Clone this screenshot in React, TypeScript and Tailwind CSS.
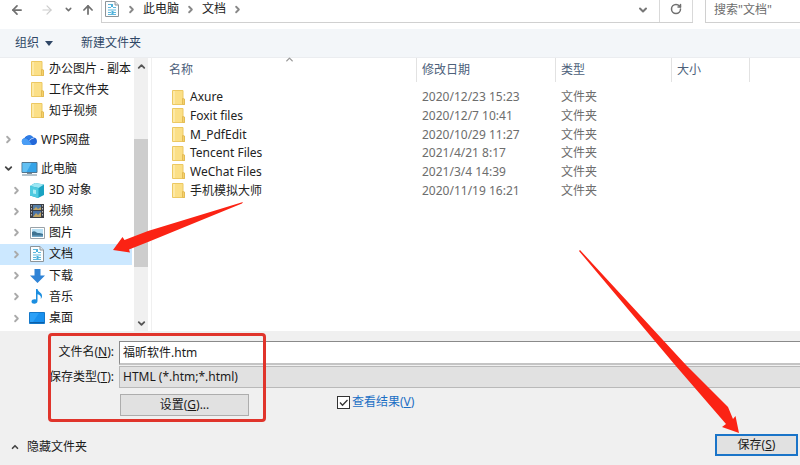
import { useState, type ReactNode } from "react";
import { ArrowLeft, ArrowRight, ArrowUp, ChevronDown, ChevronRight, ChevronUp, RotateCw } from "lucide-react";

const DocIcon = () => (
  <svg width="14" height="16" viewBox="0 0 14 16" aria-hidden="true">
    <path d="M.5.5H10L13.500 4V15.500H.5Z" fill="#fbfdfe" stroke="#8c9499" />
    <path d="M10 .5V4h3.500" fill="#dfe6ea" stroke="#8c9499" />
    <path d="M3 3.500h4M3 6.500h3M8 6.500h3M3 9h8M3 11.500h3M8 11.500h3M3 13.500h8" stroke="#5db8dd" />
    <path d="M6 3h2v3H6zM6.500 10h2v3h-2z" fill="#4db1dc" />
  </svg>
);

const FolderIcon = () => (
  <svg width="13" height="15" viewBox="0 0 13 15" className="shrink-0" aria-hidden="true">
    <path d="M.5.5h10.500v9l1.500 1v4H.5Z" fill="#fbdf86" stroke="#ecc862" />
    <path d="M10.500 8.500 12.500 9v5.500h-2z" fill="#f6d26b" stroke="#e3bb55" />
    <path d="M1 1h2v13H1z" fill="#fde9a6" />
  </svg>
);

const CloudIcon = () => (
  <svg width="17" height="12" viewBox="0 0 17 12" aria-hidden="true">
    <path d="M4 11a3.600 3.600 0 0 1-.5-7A5 5 0 0 1 12 3.500 3.800 3.800 0 0 1 13 11Z" fill="#2468d8" />
    <path d="M3.500 11a3.500 3.500 0 0 1-.3-6.800C6 3.700 7.500 6 9 8l2 3Z" fill="#4a9df5" />
    <path d="M4.500 3.500C6 1 9 .5 11 2c1 1 1.300 2 1.300 2.500C10.500 4 9.500 5 8.500 6.500 7.500 5 6.500 4 4.500 3.500Z" fill="#2f7de6" />
    <path d="M8.500 6.700C9.500 5 10.800 4.300 12.500 4.500" fill="none" stroke="#e6f1ff" strokeWidth=".8" />
  </svg>
);

const ComputerIcon = () => (
  <svg width="17" height="14" viewBox="0 0 17 14" aria-hidden="true">
    <path d="M1 .5h15v10H1Z" fill="#35a4e8" stroke="#51758e" />
    <path d="M1.500 1h9l-5 9h-4Z" fill="#62c0f3" />
    <path d="M6 11h5v1H6z" fill="#7d8b94" />
    <path d="M1 13h15" stroke="#6b8799" />
  </svg>
);

const CubeIcon = () => (
  <svg width="16" height="15" viewBox="0 0 16 15" aria-hidden="true">
    <path d="M1 3 6 0 15 1.500V12L9 15 1 12.500Z" fill="#1aa3c2" />
    <path d="M1 3 6 0l9 1.500L9.500 5Z" fill="#9be6f3" />
    <path d="M1 3l8.500 2V15L1 12.500Z" fill="#4fcbe0" />
    <path d="M4 6.500 7 7v4l-3-.5z" fill="#a9edf6" />
  </svg>
);

const VideoIcon = () => (
  <svg width="14" height="14" viewBox="0 0 14 14" aria-hidden="true">
    <path d="M0 0h14v14H0z" fill="#3c3f45" />
    <path d="M3 1h8v5H3z" fill="#557fa8" />
    <path d="M3 7h8v6H3z" fill="#4a73a5" />
    <path d="M3 6 6 3l2 2 3-2v3zM3 13l3-4 2 2 3-3v5z" fill="#c0a565" />
    <path d="M1.500 1v12M12.500 1v12" stroke="#b5b9bf" strokeDasharray="1.500 1.500" />
  </svg>
);

const PictureIcon = () => (
  <svg width="15" height="12" viewBox="0 0 15 12" aria-hidden="true">
    <path d="M.5.5h14v11H.5Z" fill="#fff" stroke="#9aa2a8" />
    <path d="M2 2h11v8H2z" fill="#b7e0f5" />
    <path d="M2 5c3-2 4 1 6 1s3 0 5 1v3H2Z" fill="#3f7391" />
    <path d="M2 8.500h11V10H2z" fill="#6fa5c4" />
  </svg>
);

const DownloadIcon = () => (
  <svg width="15" height="14" viewBox="0 0 15 14" aria-hidden="true">
    <path d="M4.500 0h6v6.500h4.500L7.500 14 0 6.500h4.500Z" fill="#2f83d6" />
  </svg>
);

const MusicIcon = () => (
  <svg width="12" height="15" viewBox="0 0 12 15" aria-hidden="true">
    <path d="M5 0h1.500c.5 3 5 3.500 4.500 7.500-.2 1.300-.7 2-1.300 2.500.8-3-1-4-3.200-4.700V12c0 1.800-1.500 2.800-3.200 2.800S.5 13.800.5 12.500 2 10.300 3.500 10.300c.6 0 1 0 1.500.3Z" fill="#1b8ee0" />
  </svg>
);

const DesktopIcon = () => (
  <svg width="16" height="12" viewBox="0 0 16 12" aria-hidden="true">
    <path d="M.5.5h15v11H.5Z" fill="#1890ee" stroke="#1478c9" />
    <path d="M1 1h9l-6 9H1z" fill="#2ba0f7" />
    <path d="M1 10.500h14" stroke="#0d5fa8" />
  </svg>
);

const quickFolders = ["办公图片 - 副本", "工作文件夹", "知乎视频"];

const pcItems: { label: string; icon: ReactNode }[] = [
  { label: "3D 对象", icon: <CubeIcon /> },
  { label: "视频", icon: <VideoIcon /> },
  { label: "图片", icon: <PictureIcon /> },
  { label: "文档", icon: <DocIcon /> },
  { label: "下载", icon: <DownloadIcon /> },
  { label: "音乐", icon: <MusicIcon /> },
  { label: "桌面", icon: <DesktopIcon /> },
];

const files = [
  { name: "Axure", date: "2020/12/23 15:23" },
  { name: "Foxit files", date: "2020/12/7 10:41" },
  { name: "M_PdfEdit", date: "2020/10/29 11:27" },
  { name: "Tencent Files", date: "2021/4/21 8:17" },
  { name: "WeChat Files", date: "2021/3/4 14:39" },
  { name: "手机模拟大师", date: "2020/11/19 16:21" },
];

function AddressBar() {
  return (
    <header className="flex h-[29px] items-start overflow-hidden text-[#222]">
      <nav className="flex h-[19px] w-[101px] shrink-0 items-center pl-2.5 text-[#707070]">
        <button type="button" aria-label="后退"><ArrowLeft size={14} strokeWidth={3} /></button>
        <button type="button" aria-label="前进" className="ml-4 text-[#ccc]"><ArrowRight size={14} strokeWidth={2} /></button>
        <button type="button" aria-label="最近浏览" className="ml-2.5"><ChevronDown size={9} strokeWidth={4} /></button>
        <button type="button" aria-label="上移" className="ml-2"><ArrowUp size={14} strokeWidth={3} /></button>
      </nav>
      <div className="flex h-[23px] flex-1 border-b border-l border-[#d0d0d0]">
        <div className="flex h-[18px] flex-1 items-center gap-1.5 pl-[3px]">
          <DocIcon />
          <ChevronRight size={11} strokeWidth={4} className="ml-px text-[#888]" />
          <a href="#pc">此电脑</a>
          <ChevronRight size={11} strokeWidth={4} className="text-[#888]" />
          <a href="#docs">文档</a>
          <ChevronRight size={11} strokeWidth={4} className="text-[#888]" />
        </div>
        <button type="button" aria-label="展开" className="h-[19px] w-8 text-[#777]">
          <ChevronDown size={12} strokeWidth={4} className="mx-auto" />
        </button>
        <button type="button" aria-label="刷新" className="w-[34px] border-x border-[#d9d9d9] pb-1 text-[#707070]">
          <RotateCw size={12} strokeWidth={3} className="mx-auto" />
        </button>
      </div>
      <input
        aria-label="搜索"
        placeholder={'搜索"文档"'}
        className="ml-3 h-[23px] w-[95px] shrink-0 border-b border-l border-[#d0d0d0] pb-1 pl-2 outline-none placeholder:text-[#6d6d6d]"
      />
    </header>
  );
}

function Sidebar() {
  const [selected, setSelected] = useState("文档");

  return (
    <aside className="flex w-[152px] shrink-0 border-r border-[#f0f0f0] text-[#1a1a1a]">
      <div className="w-[132px] whitespace-nowrap">
        <ul>
          {quickFolders.map((name) => (
            <li key={name} className="flex h-[21px] items-center pl-[31px]">
              <FolderIcon />
              <span className="ml-[5px]">{name}</span>
            </li>
          ))}
        </ul>
        <div className="mt-2 flex h-[21px] items-center pl-[3px]">
          <ChevronRight size={11} strokeWidth={4} className="text-[#aaa]" />
          <span className="ml-[7px] flex w-5 items-center"><CloudIcon /></span>
          WPS网盘
        </div>
        <ul className="mt-2 grid h-[171px] auto-rows-fr">
          <li className="flex items-center pl-[3px]">
            <ChevronDown size={11} strokeWidth={4} className="text-[#444]" />
            <span className="ml-[7px] flex w-5 items-center"><ComputerIcon /></span>
            此电脑
          </li>
          {pcItems.map((item) => (
            <li key={item.label} className={item.label === selected ? "bg-[#cce8ff]" : ""}>
              <button
                type="button"
                onClick={() => setSelected(item.label)}
                className="flex h-full w-full items-center pl-[11px] text-left"
              >
                <ChevronRight size={11} strokeWidth={4} className="text-[#aaa]" />
                <span className="ml-[7px] flex w-4 shrink-0 items-center justify-center">{item.icon}</span>
                <span className="ml-1">{item.label}</span>
              </button>
            </li>
          ))}
        </ul>
      </div>
      <div className="ml-0.5 flex w-3.5 flex-col items-center bg-[#f0f0f0] text-[#555]">
        <ChevronUp size={11} strokeWidth={4} className="mt-[3px]" />
        <div className="mt-[67px] h-32 w-full bg-[#cdcdcd]" />
        <ChevronDown size={11} strokeWidth={4} className="mt-auto mb-0.5" />
      </div>
    </aside>
  );
}

function FileList() {
  return (
    <section className="min-w-0 flex-1">
      <table className="w-full table-fixed border-collapse text-left text-[#6d6d6d]">
        <colgroup>
          <col className="w-[265px]" />
          <col className="w-[139px]" />
          <col className="w-[116px]" />
          <col className="w-[78px]" />
          <col />
        </colgroup>
        <thead className="text-[#4c607a]">
          <tr>
            <th className="h-[30px] p-0 align-top font-normal">
              <div className="relative h-6 border-r border-[#e2e2e2] pl-[17px] leading-6">
                名称
                <ChevronUp size={11} strokeWidth={3} className="absolute -top-1 left-[132px] text-[#999]" />
              </div>
            </th>
            <th className="p-0 align-top font-normal"><div className="h-6 border-r border-[#e2e2e2] pl-[5px] leading-6">修改日期</div></th>
            <th className="p-0 align-top font-normal"><div className="h-6 border-r border-[#e2e2e2] pl-[5px] leading-6">类型</div></th>
            <th className="p-0 align-top font-normal"><div className="h-6 border-r border-[#e2e2e2] pl-[5px] leading-6">大小</div></th>
            <td className="p-0" />
          </tr>
        </thead>
        <tbody>
          {files.map((file, i) => (
            <tr key={file.name} className={i % 3 === 0 ? "h-[18px]" : "h-[19px]"}>
              <td className="p-0 pl-5 text-[#222]">
                <span className="flex items-center gap-[5px]">
                  <FolderIcon />
                  {file.name}
                </span>
              </td>
              <td className="p-0 pl-[5px]">{file.date}</td>
              <td className="p-0 pl-[5px]">文件夹</td>
              <td className="p-0" />
              <td className="p-0" />
            </tr>
          ))}
        </tbody>
      </table>
    </section>
  );
}

function SaveForm() {
  const [filename, setFilename] = useState("福昕软件.htm");

  return (
    <form className="relative h-[134px] overflow-hidden bg-[#f0f0f0] text-[#1a1a1a]" onSubmit={(e) => e.preventDefault()}>
      <div className="flex pt-2.5">
        <label htmlFor="filename" className="w-[119px] pr-[5px] text-right leading-[22px]">文件名(<u>N</u>):</label>
        <input
          id="filename"
          value={filename}
          onChange={(e) => setFilename(e.target.value)}
          className="h-6 flex-1 border border-r-0 border-b-2 border-[#8a8a8a] border-b-[#c4c4c4] bg-white pb-0.5 pl-[3px] outline-none"
        />
      </div>
      <div className="mt-px flex">
        <label htmlFor="filetype" className="w-[119px] pr-[5px] text-right leading-[22px]">保存类型(<u>T</u>):</label>
        <select id="filetype" className="h-[22px] flex-1 appearance-none border border-r-0 border-[#b9b9b9] bg-[#e1e1e1] pl-[3px] outline-none">
          <option>HTML (*.htm;*.html)</option>
        </select>
      </div>
      <div className="mt-1.5 flex pl-[120px]">
        <button type="button" className="h-[22px] w-[129px] border border-[#adadad] bg-[#e1e1e1]">设置(<u>G</u>)...</button>
        <label className="ml-[88px] flex h-4 items-center gap-0.5 text-[#1c6fc4]">
          <input
            type="checkbox"
            defaultChecked
            className="peer h-[13px] w-[13px] appearance-none border border-[#333] bg-white"
          />
          <svg width="13" height="13" viewBox="0 0 13 13" className="invisible -ml-[15px] peer-checked:visible" aria-hidden="true">
            <path d="m3 6.500 2.500 2.700L10.500 4" fill="none" stroke="#333" strokeWidth="1.300" />
          </svg>
          <span>查看结果(<u>V</u>)</span>
        </label>
      </div>
      <div className="mt-[18px] flex items-start justify-between pr-0.5 pl-2.5">
        <button type="button" className="flex h-[26px] items-center gap-[7px]">
          <ChevronUp size={10} strokeWidth={4} className="text-[#444]" />
          隐藏文件夹
        </button>
        <button type="submit" className="h-[22px] w-[83px] border-2 border-[#1a74c8] bg-[#e1e1e1] leading-4">保存(<u>S</u>)</button>
      </div>
      {/* callout round the name and type fields */}
      <div className="pointer-events-none absolute top-0.5 left-12 h-[89px] w-[218px] rounded border-[3px] border-[#e0342b]" />
    </form>
  );
}

export default function App() {
  return (
    <div className="relative min-h-screen overflow-hidden bg-white font-['Noto_Sans','Noto_Sans_CJK_SC',sans-serif] text-xs">
      <AddressBar />
      <div className="flex h-[29px] items-center border-b border-[#ebedf0] bg-[#f3f6f9] pl-[15px] text-[#2f4766]">
        <button type="button" className="flex items-center gap-1.5">
          组织
          <svg width="8" height="5" viewBox="0 0 8 5" aria-hidden="true"><path d="M0 0h8L4 5Z" fill="currentColor" /></svg>
        </button>
        <button type="button" className="ml-7">新建文件夹</button>
      </div>
      <main className="flex h-[273px]">
        <Sidebar />
        <FileList />
      </main>
      <SaveForm />

      {/* pointer arrows */}
      <svg width="130" height="51" viewBox="0 0 130 51" className="pointer-events-none absolute top-[202px] left-[113px]" aria-hidden="true">
        <path d="M130 0 129 1.500 35 40 16 47.500 17 50.500 0 48 9.500 35 11.500 38 35 29Z" fill="#fb2314" />
      </svg>
      <svg width="161" height="183" viewBox="0 0 161 183" className="pointer-events-none absolute top-[250px] left-[579px]" aria-hidden="true">
        <path d="M0 1 1 0 107 115 149 157 154 169 156.500 166 160 183 143 177 147 174 96 115Z" fill="#fb2314" />
      </svg>
    </div>
  );
}
